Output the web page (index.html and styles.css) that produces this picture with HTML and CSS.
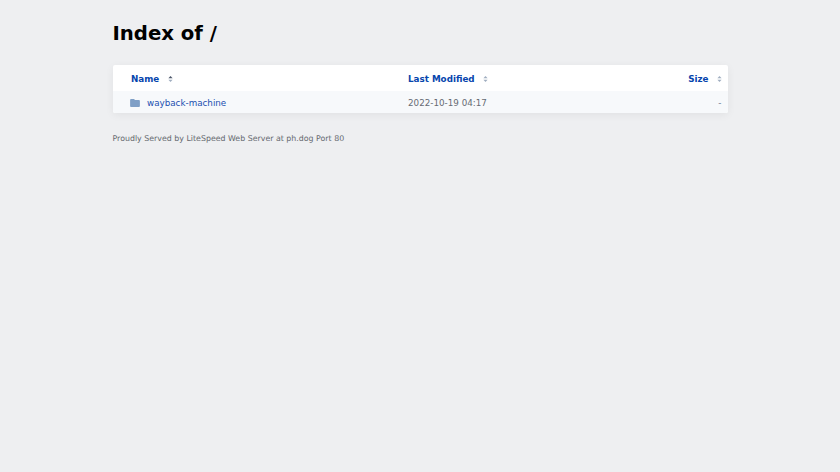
FILE: index.html
```html
<!DOCTYPE html>
<html lang="en">
<head>
<meta charset="utf-8">
<title>Index of /</title>
<link rel="stylesheet" href="styles.css">
</head>
<body>
<main class="page">
  <h1 class="title">Index of /</h1>
  <section class="listing">
    <div class="row head">
      <div class="cell name"><a href="#">Name</a>
        <svg class="sort" viewBox="0 0 6 7"><path class="active" d="M3 0 5.5 2.7H.5z"/><path d="M3 7 .5 4.3h5z"/></svg>
      </div>
      <div class="cell date"><a href="#">Last Modified</a>
        <svg class="sort" viewBox="0 0 6 7"><path d="M3 0 5.5 2.7H.5z"/><path d="M3 7 .5 4.3h5z"/></svg>
      </div>
      <div class="cell size"><a href="#">Size</a>
        <svg class="sort" viewBox="0 0 6 7"><path d="M3 0 5.5 2.7H.5z"/><path d="M3 7 .5 4.3h5z"/></svg>
      </div>
    </div>
    <div class="row item">
      <div class="cell name">
        <svg class="folder" viewBox="0 0 11 9"><path d="M1 0h3.4l1.1 1.2H10a1 1 0 0 1 1 1V8a1 1 0 0 1-1 1H1a1 1 0 0 1-1-1V1a1 1 0 0 1 1-1z"/></svg>
        <a href="#">wayback-machine</a>
      </div>
      <div class="cell date">2022-10-19 04:17</div>
      <div class="cell size">-</div>
    </div>
  </section>
  <footer class="foot">Proudly Served by LiteSpeed Web Server at ph.dog Port 80</footer>
</main>
</body>
</html>
```
FILE: styles.css
```css
html, body { margin: 0; padding: 0; }
body {
  background: #eeeff1;
  color: #666b73;
  font-family: "DejaVu Sans", sans-serif;
}
.page {
  width: 615px;
  margin: 0 auto;
  padding: 20px 0 0;
}
.title {
  margin: 0 0 18px;
  font-size: 19.7px;
  line-height: 27px;
  font-weight: 700;
  color: #000;
}
.listing {
  background: #fff;
  border-radius: 2px;
  box-shadow: 0 2px 8px rgba(0, 0, 0, 0.06);
  overflow: hidden;
}
.row {
  display: grid;
  grid-template-columns: 295.5px 1fr 100px;
  align-items: center;
  box-sizing: border-box;
  padding-top: 2px;
}
.head { height: 26px; font-size: 8.75px; font-weight: 700; }
.item { height: 22px; background: #f7f9fb; font-size: 8.75px; }
.cell { display: flex; align-items: center; white-space: nowrap; }
.cell a { color: #0645ad; text-decoration: none; }
.head .name { padding-left: 18.5px; }
.item .name { padding-left: 17.5px; }
.item .name a { color: #1a4fb0; }
.size { justify-content: flex-end; padding-right: 6px; }
.item .size { color: #718096; }
.sort { width: 5px; height: 6px; margin-left: 8px; fill: #a0aec0; }
.name .sort { margin-left: 9px; }
.sort .active { fill: #4a5568; }
.folder { width: 10px; height: 8px; margin-right: 7px; fill: #7f9fc6; }
.foot {
  margin-top: 20px;
  font-size: 7.87px;
  line-height: 11px;
  color: #666a70;
}
```
